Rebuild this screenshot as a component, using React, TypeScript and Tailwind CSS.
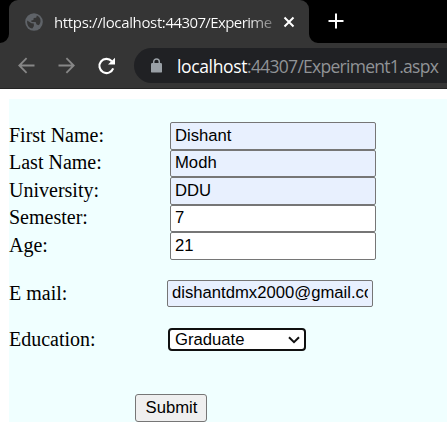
import type { ReactNode } from "react";

function Globe() {
  return (
    <svg width="18" height="18" viewBox="0 0 18 18" className="shrink-0">
      <circle cx="9" cy="9" r="8.8" fill="#5f6368" />
      <path
        d="M2.2 7.4 L6.4 10.2 L8.8 10.4 L8.9 13 L7.4 15.6 C3.8 15 1.6 11.5 2.2 7.4 Z M11.8 2.5 L11.2 4.7 L8.7 4.9 L8.4 7 L6.2 7.4 L6.5 9 L10.6 9.1 L11.6 11.6 L13.8 12.2 C16.8 9 15.9 4.2 11.8 2.5 Z"
        fill="#353535"
      />
    </svg>
  );
}

function TabBar() {
  return (
    <div className="flex h-[43px] bg-black">
      <div className="flex w-[9px] items-end">
        <svg width="9" height="9" viewBox="0 0 9 9">
          <path d="M9 0 A9 9 0 0 1 0 9 H9 Z" fill="#353535" />
        </svg>
      </div>
      <div className="flex w-[300px] items-center rounded-t-[9px] bg-[#353535] pl-4">
        <Globe />
        <div className="ml-[11px] w-[221px] overflow-hidden whitespace-nowrap bg-linear-to-r from-white from-88% to-[#353535] to-105% bg-clip-text font-['Open_Sans',sans-serif] text-[15px] leading-5 tracking-[-0.36px] text-transparent">
          https://localhost:<span className="tracking-[-0.6px]">44307/Experime</span>
        </div>
        <svg width="12" height="12" viewBox="0 0 12 12" className="ml-[8px] shrink-0">
          <path d="M1.5 1.5 L10.5 10.5 M10.5 1.5 L1.5 10.5" stroke="#fff" strokeWidth="2" />
        </svg>
      </div>
      <div className="flex items-end">
        <svg width="9" height="9" viewBox="0 0 9 9">
          <path d="M0 0 A9 9 0 0 0 9 9 H0 Z" fill="#353535" />
        </svg>
      </div>
      <svg width="16" height="16" viewBox="0 0 16 16" className="mt-[13px] ml-[10px]">
        <path d="M8 0.5 V15.5 M0.5 8 H15.5" stroke="#fff" strokeWidth="2" />
      </svg>
    </div>
  );
}

function Toolbar() {
  return (
    <div className="flex h-[46px] items-start border-b border-[#242424] bg-[#353535] pt-[5px]">
      <div className="flex h-[35px] w-[134px] items-center pl-[18px]">
        <svg width="17" height="17" viewBox="0 0 17 17" fill="none" stroke="#878787" strokeWidth="1.8">
          <path d="M16.5 8.5 H1.5 M8.6 1.2 L1.3 8.5 L8.6 15.8" />
        </svg>
        <svg width="17" height="17" viewBox="0 0 17 17" fill="none" stroke="#878787" strokeWidth="1.8" className="ml-[23px]">
          <path d="M0.5 8.5 H15.5 M8.4 1.2 L15.7 8.5 L8.4 15.8" />
        </svg>
        <svg width="19" height="18" viewBox="0 0 19 18" className="ml-[22px]">
          <path d="M14.8 4.2 A7.1 7.1 0 1 0 16.2 11.4" fill="none" stroke="#fff" strokeWidth="2.1" />
          <path d="M18 0.8 V7.6 H11 Z" fill="#fff" />
        </svg>
      </div>
      <div className="flex h-[35px] flex-1 items-center rounded-l-full bg-[#202124] pl-[17px]">
        <svg width="11" height="15" viewBox="0 0 11 15" className="shrink-0">
          <rect y="5" width="11" height="9.6" rx="1.2" fill="#9aa0a6" />
          <path d="M2.7 6 V3.7 A2.8 2.8 0 0 1 8.3 3.7 V6" fill="none" stroke="#9aa0a6" strokeWidth="1.5" />
        </svg>
        <div className="ml-[15px] whitespace-nowrap font-['Open_Sans',sans-serif] text-[17.5px] leading-6 tracking-[-0.72px] text-[#909396]">
          <span className="tracking-[-0.36px] text-white">localhost</span>:44307/Experiment1.aspx
        </div>
      </div>
    </div>
  );
}

function Row({
  label,
  rowClass,
  labelClass,
  children,
}: {
  label: string;
  rowClass: string;
  labelClass: string;
  children: ReactNode;
}) {
  return (
    <div className={`flex ${rowClass}`}>
      <label className={`shrink-0 text-[20px] leading-[23px] ${labelClass}`}>{label}</label>
      <div className="ml-auto flex">{children}</div>
    </div>
  );
}

const inputClass =
  "w-[206px] rounded-[2px] border border-[#767676] px-[4px] pt-0 pb-[2px] font-['Liberation_Sans',sans-serif] text-[16.67px] text-black outline-none";

export default function App() {
  return (
    <div className="h-[438px] w-[447px] overflow-hidden bg-white">
      <TabBar />
      <Toolbar />
      <form className="mt-[10px] ml-[9px] h-[323px] bg-[#f0ffff] pt-[23px] font-['Liberation_Serif',serif] text-black">
        <Row label="First Name:" rowClass="h-7 w-[367px]" labelClass="pt-[2px]">
          <input className={`${inputClass} bg-[#e8f0fe]`} defaultValue="Dishant" />
        </Row>
        <Row label="Last Name:" rowClass="h-[27px] w-[367px]" labelClass="pt-px">
          <input className={`${inputClass} bg-[#e8f0fe]`} defaultValue="Modh" />
        </Row>
        <Row label="University:" rowClass="h-7 w-[367px]" labelClass="pt-[2px]">
          <input className={`${inputClass} bg-[#e8f0fe]`} defaultValue="DDU" />
        </Row>
        <Row label="Semester:" rowClass="h-[27px] w-[367px]" labelClass="pt-px">
          <input className={`${inputClass} bg-white`} defaultValue="7" />
        </Row>
        <Row label="Age:" rowClass="h-7 w-[367px]" labelClass="pt-[2px]">
          <input className={`${inputClass} bg-white`} defaultValue="21" />
        </Row>
        <Row label="E mail:" rowClass="mt-5 h-[27px] w-[364px]" labelClass="pt-[2px]">
          <input className={`${inputClass} bg-[#e8f0fe]`} defaultValue="dishantdmx2000@gmail.com" />
        </Row>
        <div className="mt-[21px] flex h-[23px] w-[297px] items-center">
          <label className="-mt-px text-[20px] leading-[23px]">Education:</label>
          <button
            type="button"
            className="ml-auto flex h-[23px] w-[138px] items-center rounded-[4px] border-2 border-[#101010] bg-white pl-[5px] font-['Liberation_Sans',sans-serif] text-[16.67px] leading-[19px]"
          >
            Graduate
            <svg width="12" height="8" viewBox="0 0 12 8" className="mr-[4px] ml-auto">
              <path d="M1 1.2 L6 6.2 L11 1.2" fill="none" stroke="#101010" strokeWidth="2" />
            </svg>
          </button>
        </div>
        <button
          type="button"
          className="mt-[43px] ml-[126px] block h-7 w-[72px] rounded-[3px] border border-[#767676] bg-[#efefef] pb-px pl-px font-['Liberation_Sans',sans-serif] text-[16.67px] leading-[24px]"
        >
          Submit
        </button>
      </form>
    </div>
  );
}
